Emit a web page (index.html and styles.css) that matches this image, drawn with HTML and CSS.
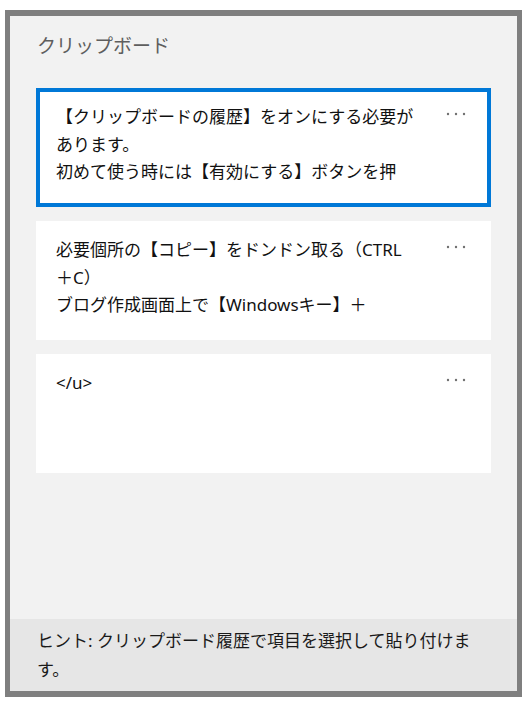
FILE: index.html
```html
<!DOCTYPE html>
<html lang="ja">
<head>
    <meta charset="UTF-8">
    <title>クリップボード</title>
    <meta name="viewport" content="width=device-width, initial-scale=1.0">
    <link rel="stylesheet" href="styles.css">
</head>
<body>

<div class="clip-panel">
    <h2 class="clip-title">クリップボード</h2>

    <div class="clip-list">
        <div class="clip-item selected">
            <div class="clip-text">
                <span class="line">【クリップボードの履歴】をオンにする必要が</span>
                <span class="line">あります。</span>
                <span class="line">初めて使う時には【有効にする】ボタンを押</span>
            </div>
            <svg class="more" width="20" height="4" viewBox="0 0 20 4">
                <circle cx="2" cy="2" r="1.2"/>
                <circle cx="10" cy="2" r="1.2"/>
                <circle cx="18" cy="2" r="1.2"/>
            </svg>
        </div>

        <div class="clip-item">
            <div class="clip-text">
                <span class="line">必要個所の【コピー】をドンドン取る（CTRL</span>
                <span class="line">＋C）</span>
                <span class="line">ブログ作成画面上で【Windowsキー】＋</span>
            </div>
            <svg class="more" width="20" height="4" viewBox="0 0 20 4">
                <circle cx="2" cy="2" r="1.2"/>
                <circle cx="10" cy="2" r="1.2"/>
                <circle cx="18" cy="2" r="1.2"/>
            </svg>
        </div>

        <div class="clip-item">
            <div class="clip-text">
                <span class="line">&lt;/u&gt;</span>
            </div>
            <svg class="more" width="20" height="4" viewBox="0 0 20 4">
                <circle cx="2" cy="2" r="1.2"/>
                <circle cx="10" cy="2" r="1.2"/>
                <circle cx="18" cy="2" r="1.2"/>
            </svg>
        </div>
    </div>

    <div class="clip-hint">ヒント: クリップボード履歴で項目を選択して貼り付けます。</div>
</div>

</body>
</html>
```

FILE: styles.css
```css
:root {
    --blue: #0078d7;
    --frame: #7f7f7f;
    --panel-bg: #f2f2f2;
    --hint-bg: #e6e6e6;
}

body {
    margin: 0;
    background: #fff;
    font-family: "Noto Sans", "Noto Sans CJK JP", sans-serif;
    color: #111;
}

.clip-panel {
    box-sizing: border-box;
    width: 517px;
    height: 687px;
    margin: 10px 0 0 5px;
    border: solid var(--frame);
    border-width: 6px 5px 6px 5px;
    background: var(--panel-bg);
    display: flex;
    flex-direction: column;
}

.clip-title {
    margin: 0;
    padding: 16px 0 0 27px;
    font-size: 19px;
    font-weight: normal;
    line-height: 28px;
    color: #5e5e5e;
}

.clip-list {
    flex: 1;
    display: flex;
    flex-direction: column;
    gap: 14px;
    margin: 28px 26px 0 26px;
}

.clip-item {
    box-sizing: border-box;
    height: 119px;
    padding: 15px 25px 0 20px;
    background: #fff;
    display: flex;
    align-items: flex-start;
}

.clip-item.selected {
    box-shadow: inset 0 0 0 4px var(--blue);
}

.clip-text {
    flex: 1;
    font-size: 17px;
    line-height: 27.5px;
    overflow: hidden;
}

.line {
    display: block;
    white-space: nowrap;
}

.more {
    margin-top: 9px;
    fill: #707070;
}

.clip-hint {
    height: 72px;
    box-sizing: border-box;
    padding: 7px 35px 0 27px;
    background: var(--hint-bg);
    font-size: 17px;
    line-height: 29px;
    color: #1a1a1a;
}
```
